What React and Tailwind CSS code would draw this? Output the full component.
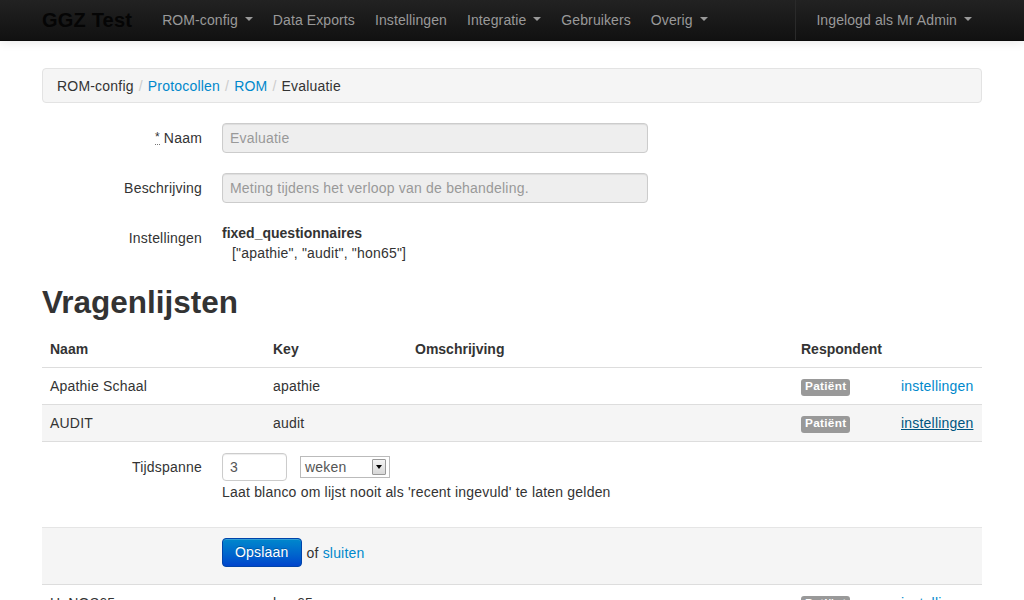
import React from "react";

const font = { fontFamily: '"Liberation Sans", Arial, Helvetica, sans-serif' };

function Caret() {
  return (
    <span className="inline-block ml-[7px] align-middle w-0 h-0 border-l-[4px] border-r-[4px] border-t-[4px] border-l-transparent border-r-transparent border-t-[#999] mt-[-2px]" />
  );
}

function NavItem({ children, caret }) {
  return (
    <a className="px-[10px] h-[40px] flex items-center text-[14px] tracking-[0.1px] text-[#999] whitespace-nowrap">
      {children}
      {caret && <Caret />}
    </a>
  );
}

function Navbar() {
  return (
    <div className="h-[41px] bg-gradient-to-b from-[#222222] to-[#111111] border-b border-[#0a0a0a] shadow-[0_1px_10px_rgba(0,0,0,0.1)]">
      <div className="w-[940px] mx-auto flex h-[40px]">
        <a className="h-[40px] flex items-center text-[20px] font-bold tracking-[0.2px] text-[#050505] mr-[20px]">
          GGZ Test
        </a>
        <NavItem caret>ROM-config</NavItem>
        <NavItem>Data Exports</NavItem>
        <NavItem>Instellingen</NavItem>
        <NavItem caret>Integratie</NavItem>
        <NavItem>Gebruikers</NavItem>
        <NavItem caret>Overig</NavItem>
        <div className="ml-auto flex h-[40px]">
          <div className="w-px h-[40px] bg-[#111] border-r border-[#2a2a2a] mr-[10px]" />
          <NavItem caret>Ingelogd als Mr Admin</NavItem>
        </div>
      </div>
    </div>
  );
}

function Breadcrumb() {
  const sep = <span className="px-[5px] text-[#ccc]">/</span>;
  return (
    <div className="h-[35px] flex items-center pt-[1px] px-[14px] bg-[#f5f5f5] border border-[#e3e3e3] rounded-[4px] text-[14px] text-[#333]">
      <span>ROM-config</span>
      {sep}
      <a className="text-[#0088cc]">Protocollen</a>
      {sep}
      <a className="text-[#0088cc]">ROM</a>
      {sep}
      <span>Evaluatie</span>
    </div>
  );
}

function FieldRow({ label, children, className = "" }) {
  return (
    <div className={"flex " + className}>
      <div className="w-[160px] shrink-0 text-right pt-[5px] leading-[20px] text-[14px] text-[#333]">{label}</div>
      <div className="ml-[20px]">{children}</div>
    </div>
  );
}

function DisabledInput({ value }) {
  return (
    <div className="w-[426px] h-[30px] px-[7px] flex items-center bg-[#eeeeee] border border-[#cccccc] rounded-[4px] text-[14px] text-[#999] shadow-[inset_0_1px_1px_rgba(0,0,0,0.075)]">
      {value}
    </div>
  );
}

function Badge() {
  return (
    <span className="inline-flex items-center h-[17px] px-[4px] rounded-[3px] bg-[#999999] text-white text-[11.8px] font-bold tracking-[0.3px] leading-none align-middle">
      Patiënt
    </span>
  );
}

function Row({ name, keyName, hover, bg }) {
  return (
    <tr className={bg ? "bg-[#f5f5f5]" : ""}>
      <td className="px-[8px] py-[8px] leading-[20px] border-t border-[#dddddd]">{name}</td>
      <td className="px-[8px] py-[8px] leading-[20px] border-t border-[#dddddd]">{keyName}</td>
      <td className="px-[8px] py-[8px] leading-[20px] border-t border-[#dddddd]"></td>
      <td className="px-[8px] py-[8px] leading-[20px] border-t border-[#dddddd]">
        <Badge />
      </td>
      <td className="px-[8px] py-[8px] leading-[20px] border-t border-[#dddddd]">
        <a className={hover ? "text-[#005580] underline" : "text-[#0088cc]"}>instellingen</a>
      </td>
    </tr>
  );
}

export default function App() {
  return (
    <div style={font} className="w-[1024px] h-[600px] overflow-hidden bg-white text-[#333] text-[14px] tracking-[0.2px]">
      <Navbar />
      <div className="w-[940px] mx-auto pt-[27px]">
        <Breadcrumb />

        <FieldRow
          className="mt-[20px]"
          label={
            <>
              <abbr className="text-[12px] no-underline border-b border-dotted border-[#777] mr-[4px] leading-[14px] inline-block align-top mt-[2px]">*</abbr>
              Naam
            </>
          }
        >
          <DisabledInput value="Evaluatie" />
        </FieldRow>
        <FieldRow className="mt-[20px]" label="Beschrijving">
          <DisabledInput value="Meting tijdens het verloop van de behandeling." />
        </FieldRow>
        <div className="flex mt-[20px]">
          <div className="w-[160px] shrink-0 text-right pt-[5px] leading-[20px]">Instellingen</div>
          <div className="ml-[20px] leading-[20px]">
            <div className="font-bold tracking-normal">fixed_questionnaires</div>
            <div className="pl-[10px]">["apathie", "audit", "hon65"]</div>
          </div>
        </div>

        <h2 className="mt-[19px] text-[31.5px] leading-[40px] font-bold tracking-normal text-[#333]">Vragenlijsten</h2>

        <table className="mt-[9px] w-[940px] table-fixed border-collapse text-[14px]">
          <colgroup>
            <col className="w-[223px]" />
            <col className="w-[142px]" />
            <col className="w-[386px]" />
            <col className="w-[100px]" />
            <col className="w-[89px]" />
          </colgroup>
          <thead>
            <tr className="tracking-normal">
              <th className="px-[8px] py-[8px] leading-[20px] text-left font-bold">Naam</th>
              <th className="px-[8px] py-[8px] leading-[20px] text-left font-bold">Key</th>
              <th className="px-[8px] py-[8px] leading-[20px] text-left font-bold">Omschrijving</th>
              <th className="px-[8px] py-[8px] leading-[20px] text-left font-bold">Respondent</th>
              <th className="px-[8px] py-[8px] leading-[20px] text-left font-bold"></th>
            </tr>
          </thead>
          <tbody>
            <Row name="Apathie Schaal" keyName="apathie" />
            <Row name="AUDIT" keyName="audit" hover bg />
            <tr>
              <td colSpan={5} className="p-0 border-t border-[#dddddd]">
                <div className="flex pt-[11px] h-[85px]">
                  <div className="w-[160px] shrink-0 text-right pt-[4px] leading-[20px]">Tijdspanne</div>
                  <div className="ml-[20px]">
                    <div className="flex items-center">
                      <div className="w-[65px] h-[28px] px-[7px] flex items-center bg-white border border-[#cccccc] rounded-[4px] text-[#555] shadow-[inset_0_1px_1px_rgba(0,0,0,0.075)]">
                        3
                      </div>
                      <div className="ml-[13px] w-[90px] h-[22px] flex items-center justify-between bg-white border border-[#bbbbbb] pl-[4px] pr-[3px] text-[#555]">
                        <span>weken</span>
                        <span className="w-[14px] h-[16px] flex items-center justify-center bg-gradient-to-b from-[#f4f4f4] to-[#d8d8d8] border border-[#999] rounded-[1px]">
                          <span className="w-0 h-0 border-l-[3.5px] border-r-[3.5px] border-t-[4px] border-l-transparent border-r-transparent border-t-black" />
                        </span>
                      </div>
                    </div>
                    <div className="mt-[1px] leading-[20px]">Laat blanco om lijst nooit als 'recent ingevuld' te laten gelden</div>
                  </div>
                </div>
                <div className="h-[57px] bg-[#f5f5f5] border-t border-[#e5e5e5] flex items-start pl-[180px] pt-[10px]">
                  <button className="h-[29px] px-[12px] rounded-[4px] text-white text-[14px] tracking-[0.2px] bg-gradient-to-b from-[#0088cc] to-[#0044cc] border border-[#0044aa] shadow-[inset_0_1px_0_rgba(255,255,255,0.2)] [text-shadow:0_-1px_0_rgba(0,0,0,0.25)]">
                    Opslaan
                  </button>
                  <span className="ml-[5px] leading-[29px] mt-[1px]">of</span>
                  <a className="ml-[4px] text-[#0088cc] leading-[29px] mt-[1px]">sluiten</a>
                </div>
              </td>
            </tr>
            <Row name="HoNOS65" keyName="hon65" />
          </tbody>
        </table>
      </div>
    </div>
  );
}
